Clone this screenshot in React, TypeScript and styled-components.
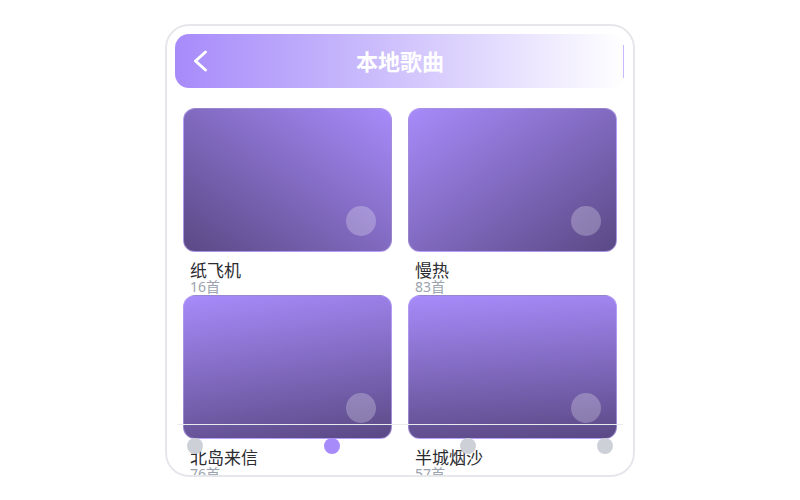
import React from "react";
import styled, { createGlobalStyle } from "styled-components";

const GlobalStyle = createGlobalStyle`
  html, body {
    margin: 0;
    padding: 0;
    background: #ffffff;
  }
  body {
    font-family: "Noto Sans", "Noto Sans CJK SC", sans-serif;
  }
`;

const Frame = styled.div`
  position: relative;
  box-sizing: border-box;
  width: 470px;
  height: 453px;
  margin: 24px auto 0;
  border: 2px solid #e6e7eb;
  border-radius: 24px;
  background: #ffffff;
  overflow: hidden;
`;

const Header = styled.div`
  display: grid;
  grid-template-columns: 48px 1fr 48px;
  align-items: center;
  height: 54px;
  margin: 8px 8px 0;
  border-radius: 14px;
  background: linear-gradient(90deg, #a78bfa 0%, #cbbdfc 45%, #ffffff 100%);
`;

const BackButton = styled.button`
  display: flex;
  align-items: center;
  justify-content: flex-start;
  padding: 0 0 0 18px;
  height: 100%;
  border: 0;
  background: transparent;
  cursor: pointer;
`;

const Title = styled.h1`
  margin: 0 0 3px;
  text-align: center;
  color: #ffffff;
  font-family: "Noto Sans CJK SC", sans-serif;
  font-size: 22px;
  font-weight: 700;
  line-height: 1;
`;

const EdgeMark = styled.span`
  justify-self: end;
  width: 1px;
  height: 33px;
  margin-right: 1px;
  background: #c9b9fc;
`;

const Grid = styled.div`
  display: grid;
  grid-template-columns: 1fr 1fr;
  grid-auto-rows: 179px;
  column-gap: 16px;
  row-gap: 8px;
  padding: 20px 16px 0;
`;

const Item = styled.div`
  display: flex;
  flex-direction: column;
  min-width: 0;
`;

const Cover = styled.div<{ $angle: string }>`
  position: relative;
  flex-shrink: 0;
  box-sizing: border-box;
  height: 144px;
  border-radius: 12px;
  border: 1px solid rgba(196, 181, 253, 0.55);
  background: linear-gradient(${(p) => p.$angle}, #a78bfa 0%, #5a4985 100%);
`;

const PlayDot = styled.span`
  position: absolute;
  right: 15px;
  bottom: 15px;
  width: 30px;
  height: 30px;
  border-radius: 50%;
  background: rgba(255, 255, 255, 0.25);
`;

const Info = styled.div`
  flex-shrink: 0;
  padding: 8px 7px 0;
  font-family: "Noto Sans CJK SC", sans-serif;
`;

const Name = styled.div`
  color: #2b2b30;
  font-size: 17px;
  line-height: 20px;
`;

const Count = styled.div`
  color: #9ca3af;
  font-family: "Noto Sans", "Noto Sans CJK SC", sans-serif;
  font-size: 14px;
  line-height: 14px;
`;

const TabBar = styled.div`
  position: absolute;
  left: 10px;
  right: 10px;
  bottom: 0;
  height: 51px;
  box-sizing: border-box;
  display: flex;
  justify-content: space-between;
  align-items: flex-start;
  padding: 13px 10px 0;
  border-top: 1px solid #e8eaee;
`;

const TabDot = styled.span<{ $active?: boolean }>`
  width: 16px;
  height: 16px;
  border-radius: 50%;
  background: ${(p) => (p.$active ? "#a78bfa" : "#cdd1d7")};
`;

const albums = [
  { name: "纸飞机", count: 16, angle: "to bottom left" },
  { name: "慢热", count: 83, angle: "to bottom right" },
  { name: "北岛来信", count: 76, angle: "172deg" },
  { name: "半城烟沙", count: 57, angle: "176deg" },
];

const App = () => {
  return (
    <>
      <GlobalStyle />
      <Frame>
        <Header>
          <BackButton aria-label="返回">
            <svg width="15" height="22" viewBox="0 0 15 22" fill="none">
              <path
                d="M12.5 2 L2.5 11 L12.5 20"
                stroke="#ffffff"
                strokeWidth="3"
                strokeLinecap="round"
                strokeLinejoin="round"
              />
            </svg>
          </BackButton>
          <Title>本地歌曲</Title>
          <EdgeMark />
        </Header>
        <Grid>
          {albums.map((a) => (
            <Item key={a.name}>
              <Cover $angle={a.angle}>
                <PlayDot />
              </Cover>
              <Info>
                <Name>{a.name}</Name>
                <Count>{a.count}首</Count>
              </Info>
            </Item>
          ))}
        </Grid>
        <TabBar>
          <TabDot />
          <TabDot $active />
          <TabDot />
          <TabDot />
        </TabBar>
      </Frame>
    </>
  );
};

export default App;
